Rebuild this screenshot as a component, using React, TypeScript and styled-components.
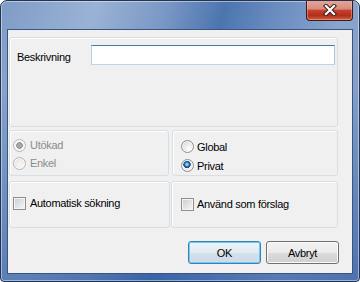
import React from "react";
import styled, { createGlobalStyle } from "styled-components";

const GlobalStyle = createGlobalStyle`
  html, body {
    margin: 0;
    padding: 0;
    background: #ffffff;
  }
  body {
    font-family: "Liberation Sans", Arial, sans-serif;
    font-size: 11px;
    letter-spacing: -0.3px;
    color: #000;
  }
`;

const Window = styled.div`
  width: 360px;
  height: 282px;
  box-sizing: border-box;
  border: 1px solid #22344f;
  border-radius: 7px 7px 4px 4px;
  padding: 0 6px 7px;
  display: flex;
  flex-direction: column;
  overflow: hidden;
  background:
    linear-gradient(to bottom, rgba(255, 255, 255, 0) 30%, rgba(40, 85, 160, 0.55) 100%),
    linear-gradient(105deg, #7f9cc7 0%, #9ab2d5 22%, #7b99c6 38%, #4c75af 52%, #6a8cc0 64%, #8aa5cd 80%, #7896c3 100%);
  box-shadow: inset 0 0 0 1px rgba(255, 255, 255, 0.45);
`;

const TitleBar = styled.div`
  height: 28px;
  display: flex;
  justify-content: flex-end;
  align-items: flex-start;
`;

const CloseButton = styled.div`
  width: 47px;
  height: 21px;
  margin-top: -1px;
  box-sizing: border-box;
  border: 1px solid #3d1a12;
  border-top: none;
  border-radius: 0 0 4px 4px;
  background: linear-gradient(#e7a89b 0%, #d98b7c 45%, #c3422f 52%, #b52d1b 78%, #d3623e 100%);
  box-shadow: inset 0 0 0 1px rgba(255, 220, 210, 0.35);
  display: flex;
  align-items: center;
  justify-content: center;
`;

const Client = styled.div`
  flex: 1;
  box-sizing: border-box;
  border: 1px solid #3a5680;
  background: #f0f0f0;
  display: flex;
  flex-direction: column;
  padding: 7px 14px 0 1px;
`;

const Group = styled.div<{ $w?: number; $h: number; $pt: number; $pl: number }>`
  box-sizing: border-box;
  ${(p) => (p.$w ? `width: ${p.$w}px; flex: none;` : "flex: 1;")}
  height: ${(p) => p.$h}px;
  border: 1px solid #d5dfe5;
  border-radius: 3px;
  box-shadow: inset 1px 1px 0 #ffffff;
  padding: ${(p) => p.$pt}px 2px 0 ${(p) => p.$pl}px;
`;

const DescGroup = styled(Group)`
  flex: none;
  display: flex;
  align-items: flex-start;
`;

const Row = styled.div<{ $mt: number; $gap: number }>`
  display: flex;
  flex: none;
  margin-top: ${(p) => p.$mt}px;
  gap: ${(p) => p.$gap}px;
`;

const Label = styled.div`
  width: 74px;
  margin-top: 6px;
  line-height: 13px;
`;

const TextBox = styled.div`
  flex: 1;
  height: 20px;
  box-sizing: border-box;
  background: #ffffff;
  border: 1px solid;
  border-color: #3d7bad #a4c9e3 #b7d9ed #b5cfe7;
`;

const Option = styled.div<{ $h: number; $gap: number; $disabled?: boolean }>`
  display: flex;
  align-items: center;
  height: ${(p) => p.$h}px;
  gap: ${(p) => p.$gap}px;
  color: ${(p) => (p.$disabled ? "#8b8b8b" : "#000")};
  white-space: nowrap;
`;

const Radio = styled.span<{ $checked?: boolean; $disabled?: boolean }>`
  width: 13px;
  height: 13px;
  flex: none;
  box-sizing: border-box;
  border-radius: 50%;
  border: 1px solid ${(p) => (p.$disabled ? "#b6b6b6" : "#8e8f8f")};
  background: ${(p) =>
    p.$checked
      ? p.$disabled
        ? "radial-gradient(circle at 50% 50%, #a9a9a9 0 2px, #8f8f8f 2.5px 3px, #f2f2f2 3.5px)"
        : "radial-gradient(circle at 45% 40%, #8ed1f5 0 1px, #2a7cc4 2px, #1a5590 3px, #2c4a6c 3.5px, #f4f4f4 4px, #e4e4e4 6px)"
      : p.$disabled
      ? "radial-gradient(circle at 60% 65%, #f8f8f8 0, #e8e8e8 6px)"
      : "radial-gradient(circle at 65% 70%, #ffffff 0, #e0e0e0 7px)"};
  box-shadow: inset 0 0 0 1px rgba(255, 255, 255, 0.7);
`;

const Checkbox = styled.span`
  width: 13px;
  height: 13px;
  flex: none;
  box-sizing: border-box;
  border: 1px solid #8f8f8f;
  background: linear-gradient(135deg, #c8ccd2 0%, #e6e7e9 60%, #f7f7f7 100%);
  box-shadow: inset 0 0 0 1px #f4f4f4;
`;

const ButtonRow = styled.div`
  display: flex;
  flex: none;
  justify-content: flex-end;
  gap: 5px;
  margin-top: 13px;
  margin-right: -1px;
`;

const Button = styled.div<{ $default?: boolean }>`
  width: 73px;
  height: 23px;
  box-sizing: border-box;
  border-radius: 3px;
  display: flex;
  align-items: center;
  justify-content: center;
  border: 1px solid ${(p) => (p.$default ? "#3c7fb1" : "#707070")};
  box-shadow: inset 0 0 0 1px ${(p) => (p.$default ? "#6fcdf5" : "#fbfbfb")};
  background: ${(p) =>
    p.$default
      ? "linear-gradient(#edf4f9 0%, #e2ebf2 50%, #d4e1eb 51%, #cddbe6 100%)"
      : "linear-gradient(#f2f2f2 0%, #ebebeb 50%, #dddddd 51%, #cfcfcf 100%)"};
`;

export default function App() {
  return (
    <>
      <GlobalStyle />
      <Window>
        <TitleBar>
          <CloseButton>
            <svg width="14" height="12" viewBox="0 0 14 12">
              <path d="M3 2 L11 10 M11 2 L3 10" stroke="#3a1f1a" strokeWidth="4.2" strokeLinecap="square" />
              <path d="M3 2 L11 10 M11 2 L3 10" stroke="#ffffff" strokeWidth="2.2" strokeLinecap="square" />
            </svg>
          </CloseButton>
        </TitleBar>
        <Client>
          <DescGroup $h={90} $pt={7} $pl={7}>
            <Label>Beskrivning</Label>
            <TextBox />
          </DescGroup>

          <Row $mt={3} $gap={3}>
            <Group $w={160} $h={46} $pt={5} $pl={3}>
              <Option $h={18} $gap={4} $disabled>
                <Radio $checked $disabled />
                Utökad
              </Option>
              <Option $h={18} $gap={4} $disabled>
                <Radio $disabled />
                Enkel
              </Option>
            </Group>
            <Group $h={46} $pt={6} $pl={8}>
              <Option $h={19} $gap={3}>
                <Radio />
                Global
              </Option>
              <Option $h={19} $gap={3}>
                <Radio $checked />
                Privat
              </Option>
            </Group>
          </Row>

          <Row $mt={5} $gap={1}>
            <Group $w={161} $h={47} $pt={12} $pl={3}>
              <Option $h={18} $gap={4}>
                <Checkbox />
                Automatisk sökning
              </Option>
            </Group>
            <Group $h={47} $pt={13} $pl={9}>
              <Option $h={18} $gap={3}>
                <Checkbox />
                Använd som förslag
              </Option>
            </Group>
          </Row>

          <ButtonRow>
            <Button $default>OK</Button>
            <Button>Avbryt</Button>
          </ButtonRow>
        </Client>
      </Window>
    </>
  );
}
